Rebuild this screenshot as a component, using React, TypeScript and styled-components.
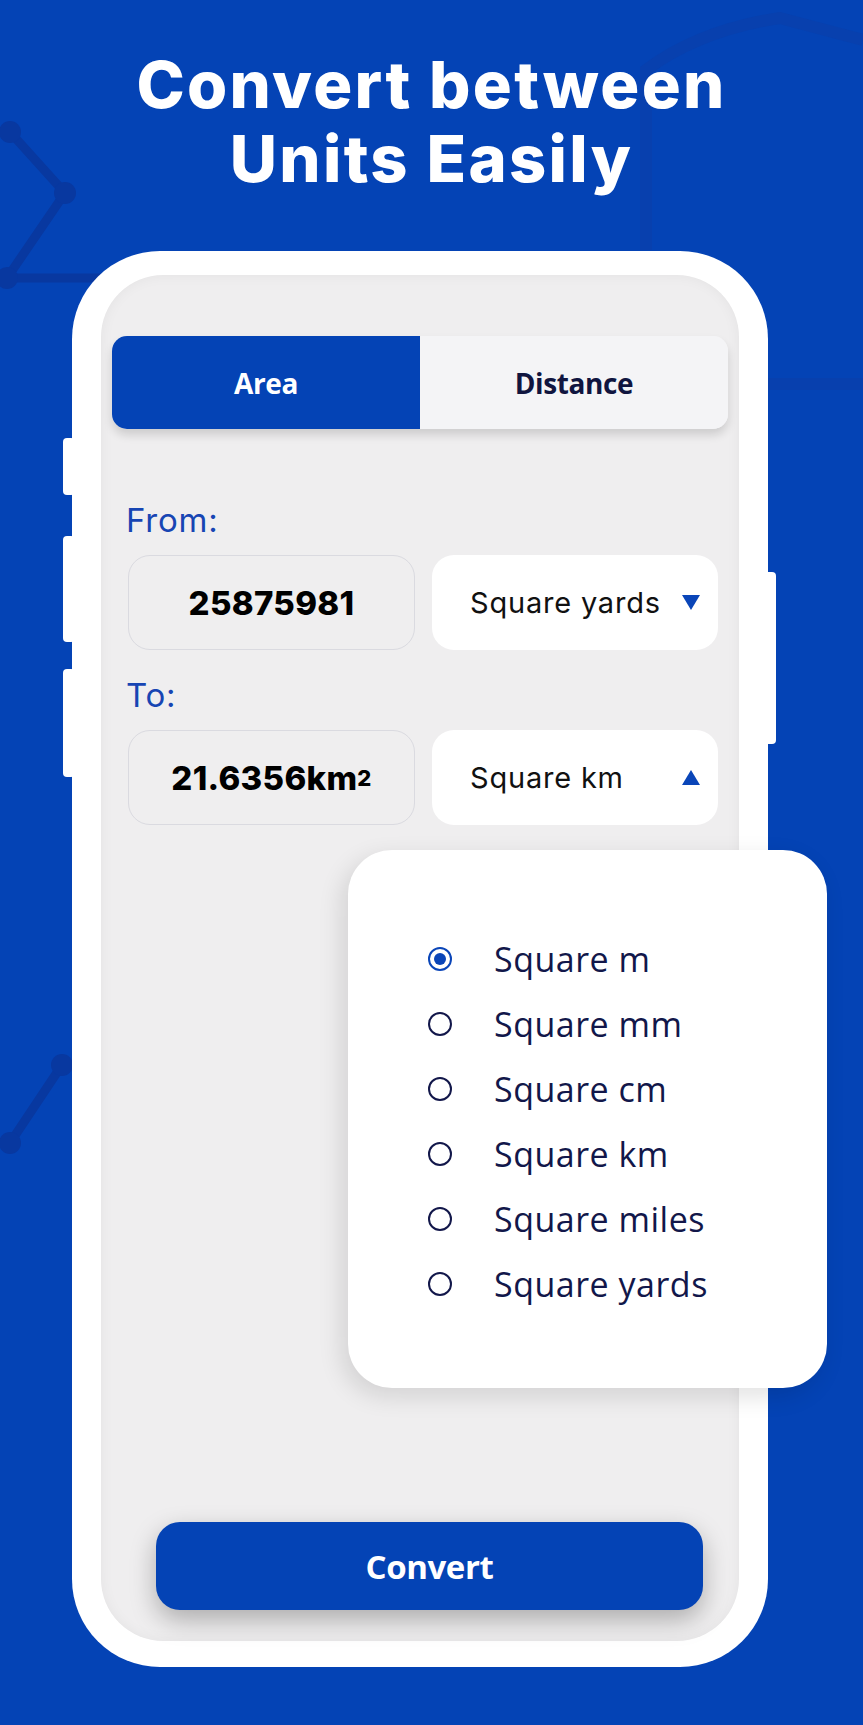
import styled, { createGlobalStyle } from "styled-components";

const GlobalStyle = createGlobalStyle`
  html, body {
    margin: 0;
    padding: 0;
  }
  body {
    font-family: "Inter", "Liberation Sans", sans-serif;
    background: #0443b5;
  }
`;

const Page = styled.div`
  position: relative;
  width: 863px;
  height: 1725px;
  overflow: hidden;
  background: #0443b5;
`;

const Decor = styled.svg`
  position: absolute;
  inset: 0;
  pointer-events: none;
`;

const Title = styled.h1`
  position: relative;
  margin: 0;
  padding-top: 48px;
  text-align: center;
  color: #ffffff;
  font-family: "Inter", "Liberation Sans", sans-serif;
  font-weight: 800;
  font-size: 65px;
  line-height: 74px;
  letter-spacing: 2.3px;
`;

const Phone = styled.div`
  position: relative;
  margin: 55px 0 0 72px;
  width: 696px;
  height: 1416px;
  box-sizing: border-box;
  padding: 24px 29px 26px;
  background: #ffffff;
  border-radius: 88px;
`;

const SideKey = styled.div<{ $side: "left" | "right"; $top: number; $h: number }>`
  position: absolute;
  ${(p) => (p.$side === "left" ? "left: -9px;" : "right: -8px;")}
  top: ${(p) => p.$top}px;
  width: 12px;
  height: ${(p) => p.$h}px;
  background: #ffffff;
  border-radius: 4px;
`;

const Screen = styled.div`
  height: 100%;
  box-sizing: border-box;
  background: #efeeef;
  border-radius: 62px;
  box-shadow: inset 0 0 14px rgba(0, 0, 0, 0.05);
  display: flex;
  flex-direction: column;
  padding: 61px 11px 31px;
`;

const Tabs = styled.div`
  display: grid;
  grid-template-columns: 1fr 1fr;
  height: 93px;
  border-radius: 15px;
  overflow: hidden;
  background: #f4f4f6;
  box-shadow: 0 6px 10px rgba(0, 0, 0, 0.14);
`;

const Tab = styled.div<{ $active?: boolean }>`
  display: flex;
  align-items: center;
  justify-content: center;
  background: ${(p) => (p.$active ? "#0443b5" : "#f4f4f6")};
  color: ${(p) => (p.$active ? "#ffffff" : "#10153f")};
  font-family: "Open Sans", "Liberation Sans", sans-serif;
  font-weight: 700;
  font-size: 28px;
  letter-spacing: -0.4px;
`;

const Form = styled.div`
  padding: 0 10px 0 16px;
`;

const FieldGroup = styled.div<{ $gap: number }>`
  margin-top: ${(p) => p.$gap}px;
`;

const Label = styled.div`
  color: #1745b3;
  font-family: "Inter", "Liberation Sans", sans-serif;
  font-size: 33px;
  line-height: 36px;
  letter-spacing: 0.8px;
  margin: 0 0 17px -2px;
`;

const Row = styled.div`
  display: grid;
  grid-template-columns: 287px 286px;
  gap: 17px;
  height: 95px;
`;

const ValueBox = styled.div`
  display: flex;
  align-items: center;
  justify-content: center;
  border: 1px solid #dadae0;
  border-radius: 22px;
  background: #efeeef;
  color: #000000;
  font-family: "Inter", "Liberation Sans", sans-serif;
  font-weight: 800;
  font-size: 33px;
  letter-spacing: 0.3px;
`;

const Sup = styled.sup`
  font-size: 22px;
  vertical-align: 12px;
`;

const Select = styled.div`
  display: flex;
  align-items: center;
  justify-content: space-between;
  padding: 0 18px 0 38px;
  border-radius: 22px;
  background: #ffffff;
  color: #111111;
  font-family: "Inter", "Liberation Sans", sans-serif;
  font-size: 29px;
  letter-spacing: 0.8px;
`;

const Caret = styled.span<{ $up?: boolean }>`
  width: 0;
  height: 0;
  border-left: 9px solid transparent;
  border-right: 9px solid transparent;
  ${(p) =>
    p.$up ? "border-bottom: 15px solid #0a45b8;" : "border-top: 15px solid #0a45b8;"}
`;

const Popup = styled.div`
  position: absolute;
  left: 276px;
  top: 599px;
  width: 479px;
  height: 538px;
  box-sizing: border-box;
  padding: 76px 0 0 80px;
  background: #ffffff;
  border-radius: 44px;
  box-shadow: -6px 8px 24px rgba(0, 0, 0, 0.12);
`;

const Option = styled.div`
  display: flex;
  align-items: center;
  height: 65px;
  color: #12174a;
  font-family: "Open Sans", "Liberation Sans", sans-serif;
  font-size: 34px;
  letter-spacing: 0.5px;
`;

const Radio = styled.span<{ $checked?: boolean }>`
  position: relative;
  width: 24px;
  height: 24px;
  box-sizing: border-box;
  margin-right: 42px;
  border-radius: 50%;
  border: 2.5px solid ${(p) => (p.$checked ? "#0a45b8" : "#12174a")};

  &::after {
    content: "";
    display: ${(p) => (p.$checked ? "block" : "none")};
    position: absolute;
    inset: 4px;
    border-radius: 50%;
    background: #0a45b8;
  }
`;

const ConvertButton = styled.button`
  margin: auto 0 0 44px;
  width: 547px;
  height: 88px;
  border: 0;
  border-radius: 24px;
  background: #0443b5;
  color: #ffffff;
  font-family: "Open Sans", "Liberation Sans", sans-serif;
  font-weight: 700;
  font-size: 33px;
  letter-spacing: -0.4px;
  box-shadow: 0 10px 26px rgba(0, 0, 0, 0.28);
`;

const units = [
  "Square m",
  "Square mm",
  "Square cm",
  "Square km",
  "Square miles",
  "Square yards",
];

export default function App() {
  return (
    <>
      <GlobalStyle />
      <Page>
        <Decor width="863" height="1725" viewBox="0 0 863 1725">
          <g stroke="#0838a0" strokeWidth="9" fill="none" strokeLinejoin="round">
            <path d="M10 132 L65 193 L7 278 L110 278" />
            <path d="M62 1065 L10 1143" />
          </g>
          <g fill="#0838a0">
            <circle cx="10" cy="132" r="11" />
            <circle cx="65" cy="193" r="11" />
            <circle cx="7" cy="278" r="11" />
            <circle cx="62" cy="1065" r="11" />
            <circle cx="10" cy="1143" r="11" />
          </g>
          <g stroke="#0840ae" strokeWidth="12" fill="none">
            <path d="M646 250 L646 70 Q700 30 780 18 L863 40" />
            <path d="M760 384 L863 384" />
          </g>
        </Decor>

        <Title>
          Convert between
          <br />
          Units Easily
        </Title>

        <Phone>
          <SideKey $side="left" $top={187} $h={57} />
          <SideKey $side="left" $top={285} $h={106} />
          <SideKey $side="left" $top={418} $h={108} />
          <SideKey $side="right" $top={321} $h={172} />

          <Screen>
            <Tabs>
              <Tab $active>Area</Tab>
              <Tab>Distance</Tab>
            </Tabs>

            <Form>
              <FieldGroup $gap={73}>
                <Label>From:</Label>
                <Row>
                  <ValueBox>25875981</ValueBox>
                  <Select>
                    Square yards
                    <Caret />
                  </Select>
                </Row>
              </FieldGroup>
              <FieldGroup $gap={27}>
                <Label>To:</Label>
                <Row>
                  <ValueBox>
                    21.6356km<Sup>2</Sup>
                  </ValueBox>
                  <Select>
                    Square km
                    <Caret $up />
                  </Select>
                </Row>
              </FieldGroup>
            </Form>

            <ConvertButton>Convert</ConvertButton>
          </Screen>

          <Popup>
            {units.map((u, i) => (
              <Option key={u}>
                <Radio $checked={i === 0} />
                {u}
              </Option>
            ))}
          </Popup>
        </Phone>
      </Page>
    </>
  );
}
